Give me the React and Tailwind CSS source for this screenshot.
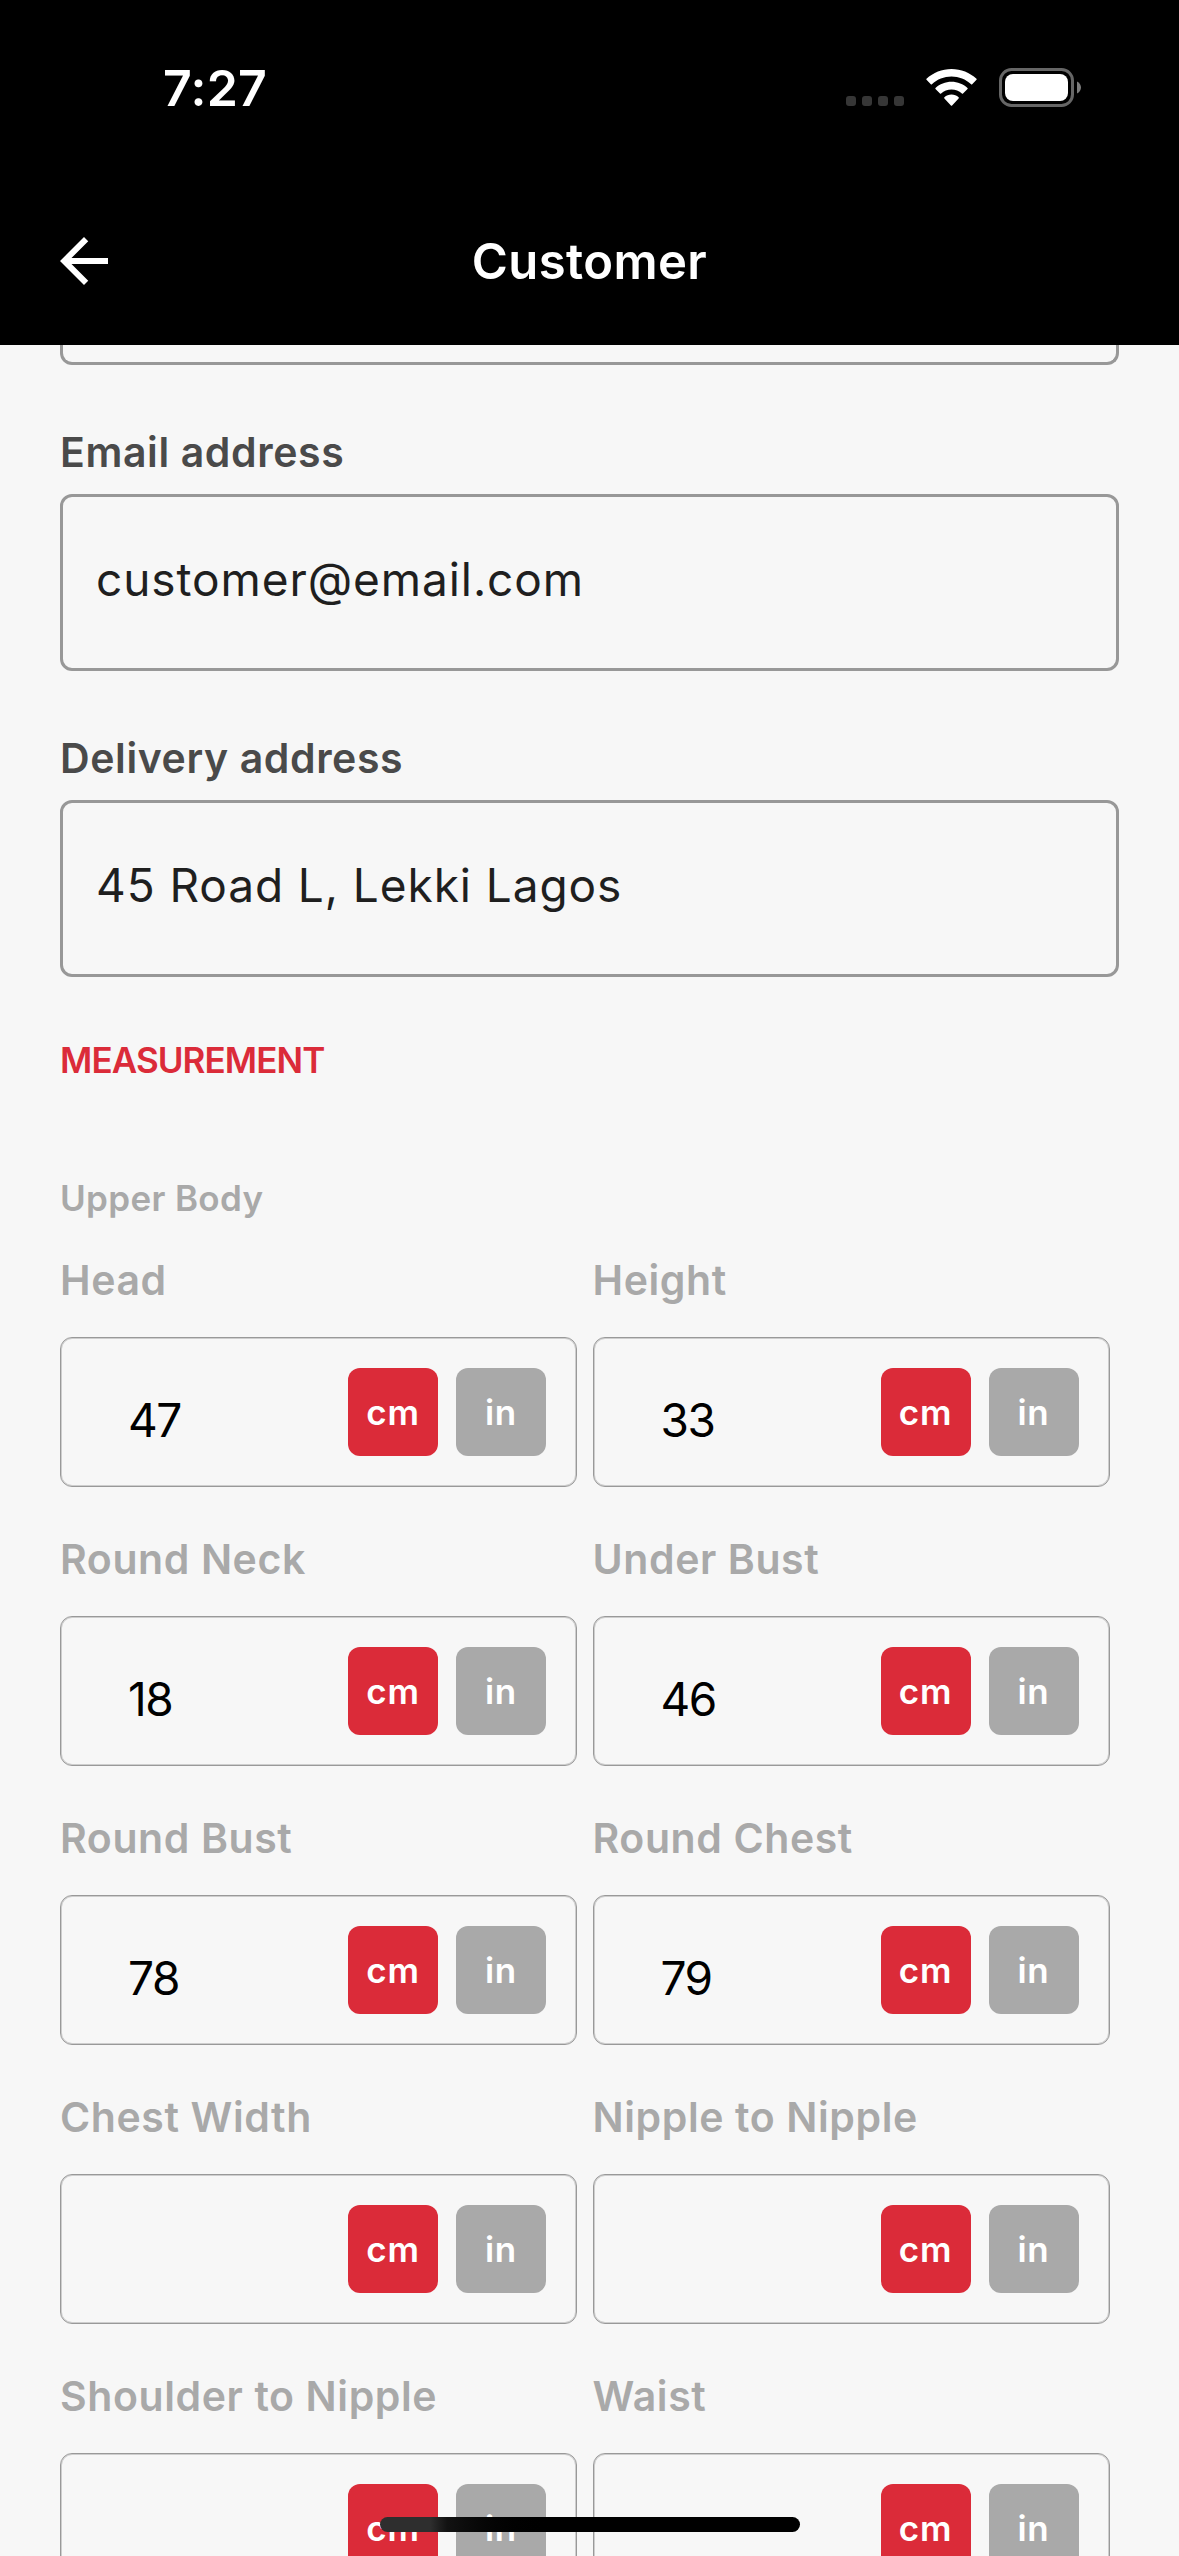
import React from 'react';

const measurements = [
  { label: 'Head', value: '47' },
  { label: 'Height', value: '33' },
  { label: 'Round Neck', value: '18' },
  { label: 'Under Bust', value: '46' },
  { label: 'Round Bust', value: '78' },
  { label: 'Round Chest', value: '79' },
  { label: 'Chest Width', value: '' },
  { label: 'Nipple to Nipple', value: '' },
  { label: 'Shoulder to Nipple', value: '' },
  { label: 'Waist', value: '' },
];

function StatusBar() {
  return (
    <div className="flex h-[129px] items-center justify-between pt-[46px] pl-[163px] pr-[98px]">
      <span className="text-[50px] leading-none font-semibold tracking-[0.3px]">7:27</span>
      <div className="flex h-[39px] items-start gap-[22px]">
        <div className="mt-7 flex gap-[6px]">
          <i className="h-[10px] w-[10px] rounded-[3px] bg-[#363636]" />
          <i className="h-[10px] w-[10px] rounded-[3px] bg-[#363636]" />
          <i className="h-[10px] w-[10px] rounded-[3px] bg-[#363636]" />
          <i className="h-[10px] w-[10px] rounded-[3px] bg-[#363636]" />
        </div>
        <svg className="mt-px" width="51" height="38" viewBox="0 0 51 38" fill="#fff">
          <path d="M25.5 0C35 0 43.800 3.600 50.500 9.800Q51 10.300 50.500 10.800L46.200 15.200Q45.700 15.700 45.100 15.200C39.800 10.300 32.900 7.500 25.500 7.500S11.200 10.300 5.900 15.200Q5.300 15.700 4.800 15.200L.5 10.800Q0 10.300 .5 9.800C7.200 3.600 16 0 25.500 0Z" />
          <path d="M25.500 12.800C31.600 12.800 37.200 15.100 41.500 19Q42 19.500 41.500 20L37 24.500Q36.500 25 35.900 24.500C33.100 22 29.500 20.500 25.500 20.500S17.900 22 15.100 24.500Q14.500 25 14 24.500L9.500 20Q9 19.500 9.500 19C13.800 15.100 19.400 12.800 25.500 12.800Z" />
          <path d="M25.500 25.600C28.200 25.600 30.700 26.600 32.600 28.300Q33.200 28.900 32.600 29.500L26.100 36.500Q25.500 37.100 24.900 36.500L18.400 29.500Q17.800 28.900 18.400 28.300C20.300 26.600 22.800 25.600 25.500 25.600Z" />
        </svg>
        <svg width="82" height="39" viewBox="0 0 82 39">
          <rect x="1.500" y="1.500" width="72" height="36" rx="11" fill="none" stroke="#666" strokeWidth="3" />
          <rect x="6" y="6" width="63" height="27" rx="8" fill="#fff" />
          <path d="M78 13.500C80.400 14.600 82 17 82 19.500S80.400 24.400 78 25.500Z" fill="#7d7d7d" />
        </svg>
      </div>
    </div>
  );
}

function NavBar() {
  return (
    <div className="mt-12 grid h-[168px] grid-cols-[1fr_auto_1fr] items-center">
      <svg className="ml-12" width="72" height="72" viewBox="0 0 24 24" fill="#fff">
        <path d="M20 11H7.830l5.590-5.590L12 4l-8 8 8 8 1.410-1.410L7.830 13H20v-2z" />
      </svg>
      <h1 className="text-[49px] leading-none font-semibold tracking-[0.4px]">Customer</h1>
      <span />
    </div>
  );
}

function Field({ label, value }) {
  return (
    <div className="mt-[63px]">
      <div className="text-[41px] leading-[49px] font-semibold tracking-[0.6px] text-[#4a4a4a]">{label}</div>
      <div className="mt-[17px] flex h-[177px] items-center rounded-xl border-3 border-[#989898] pb-[6px] pl-[33px] text-[46px] tracking-[0.92px] text-[#1f1f1f]">
        {value}
      </div>
    </div>
  );
}

function Measurement({ label, value }) {
  return (
    <div>
      <div className="text-[41px] leading-[49px] font-semibold tracking-[0.6px] whitespace-nowrap text-[#a9a9a9]">{label}</div>
      <div className="mt-8 flex h-[150px] items-center rounded-xl border border-[#999] pr-[30px] pl-[67px] shadow-[inset_0_0_0_1px_#cecece]">
        <span className="flex-1 pt-[15px] text-[46px] leading-none tracking-[-1.5px] text-black">{value}</span>
        <div className="flex gap-[18px] text-[35px] font-semibold tracking-[0.8px] text-white">
          <span className="flex h-[88px] w-[90px] items-center justify-center rounded-xl bg-[#db2b39]">cm</span>
          <span className="flex h-[88px] w-[90px] items-center justify-center rounded-xl bg-[#a9a9a9]">in</span>
        </div>
      </div>
    </div>
  );
}

export default function App() {
  return (
    <div className="relative h-[2556px] w-[1179px] overflow-hidden bg-[#f7f7f7] font-['Inter',sans-serif]">
      <header className="h-[345px] bg-black text-white">
        <StatusBar />
        <NavBar />
      </header>
      <main className="px-[60px]">
        <div className="h-5 rounded-b-xl border-3 border-t-0 border-[#989898]" />
        <Field label="Email address" value="customer@email.com" />
        <Field label="Delivery address" value="45 Road L, Lekki Lagos" />
        <h2 className="mt-[63px] text-[35px] leading-10 font-semibold tracking-[-0.9px] text-[#db2b39]">MEASUREMENT</h2>
        <h3 className="mt-[98px] text-[35px] leading-10 font-semibold tracking-[0.35px] text-[#a9a9a9]">Upper Body</h3>
        <div className="mt-[38px] grid grid-cols-[517px_517px] gap-x-[15.5px] gap-y-12">
          {measurements.map((m) => (
            <Measurement key={m.label} label={m.label} value={m.value} />
          ))}
        </div>
      </main>
      <div className="absolute top-[2517px] left-[380px] h-[15px] w-[420px] rounded-full bg-linear-to-r from-[#2e2e2e] from-12% via-[#121212] via-16% to-black to-42%" />
    </div>
  );
}
